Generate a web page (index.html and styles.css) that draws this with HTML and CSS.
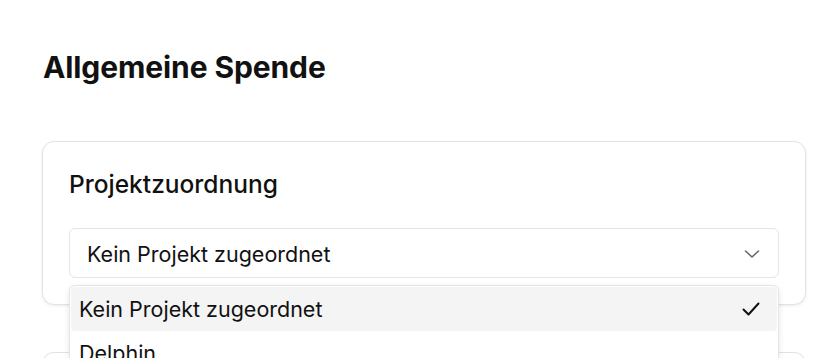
FILE: index.html
```html
<!DOCTYPE html>
<html lang="de">
<head>
<meta charset="utf-8">
<link rel="stylesheet" href="styles.css">
</head>
<body>
<main class="page">
  <h1 class="title">Allgemeine Spende</h1>
  <section class="card">
    <h2 class="card-title">Projektzuordnung</h2>
    <div class="select-wrap">
      <button class="select" type="button">
        <span>Kein Projekt zugeordnet</span>
        <svg class="chev" width="18" height="18" viewBox="0 0 18 18" fill="none" stroke="#6b6b6b" stroke-width="1.6" stroke-linecap="round" stroke-linejoin="round"><path d="M2.5 6 9 12l6.5-6"/></svg>
      </button>
      <ul class="menu">
        <li class="item active"><span>Kein Projekt zugeordnet</span>
          <svg class="check" width="20" height="20" viewBox="0 0 20 20" fill="none" stroke="#111" stroke-width="2" stroke-linecap="round" stroke-linejoin="round"><path d="M2.5 10.5 7.5 15.5 17.5 4.5"/></svg>
        </li>
        <li class="item"><span>Delphin</span></li>
      </ul>
    </div>
  </section>
  <section class="card next"></section>
</main>
</body>
</html>
```

FILE: styles.css
```css
* { box-sizing: border-box; }
html, body { margin: 0; padding: 0; background: #fff; overflow: hidden; }
body {
  font-family: Inter, "Noto Sans", "Liberation Sans", sans-serif;
  color: #111;
}
.page {
  padding: 49px 16px 0 42px;
}
.title {
  margin: 0 0 56px 1px;
  font-size: 30px;
  font-weight: 700;
  line-height: 36px;
  letter-spacing: -0.1px;
}
.card {
  border: 1px solid #e3e3e3;
  border-radius: 12px;
  padding: 26px;
  box-shadow: 0 1px 3px rgba(0,0,0,0.08);
  background: #fff;
}
.card.next { margin-top: 47px; height: 80px; }
.card-title {
  margin: 0 0 28px 0;
  font-size: 24.5px;
  font-weight: 500;
  line-height: 32px;
}
.select-wrap { position: relative; }
.select {
  width: 100%;
  height: 50px;
  display: flex;
  align-items: center;
  justify-content: space-between;
  padding: 1px 17px 0 17px;
  border: 1px solid #e5e5e5;
  border-radius: 6px;
  background: #fff;
  font: inherit;
  font-size: 21.5px;
  color: #111;
}
.menu {
  position: absolute;
  left: 0;
  right: 0;
  top: 57px;
  margin: 0;
  padding: 1px;
  list-style: none;
  background: #fff;
  border: 1px solid #e5e5e5;
  border-radius: 6px;
  box-shadow: 0 2px 6px rgba(0,0,0,0.1);
  z-index: 2;
}
.item {
  height: 44px;
  display: flex;
  align-items: center;
  justify-content: space-between;
  padding: 0 16px 0 8px;
  font-size: 21.5px;
  border-radius: 4px;
}
.item.active { background: #f4f4f4; }
```
